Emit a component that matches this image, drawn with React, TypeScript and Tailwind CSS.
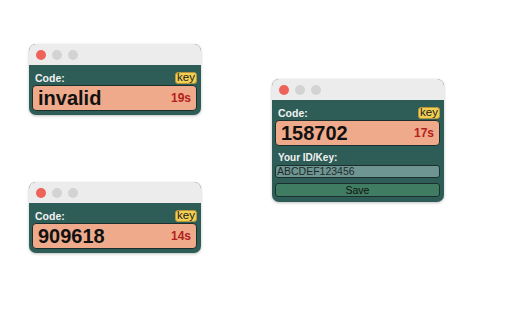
import React from "react";

type WinProps = {
  code: string;
  secs: number;
  withForm?: boolean;
};

function TitleBar() {
  return (
    <div className="h-[21px] bg-[#ececec] flex items-center gap-[6px] pl-[7px]">
      <span className="w-[10px] h-[10px] rounded-full bg-[#ee6259]" />
      <span className="w-[10px] h-[10px] rounded-full bg-[#d3d3d3]" />
      <span className="w-[10px] h-[10px] rounded-full bg-[#d3d3d3]" />
    </div>
  );
}

function CodeWindow({ code, secs, withForm }: WinProps) {
  return (
    <div className="w-[172px] rounded-[7px] overflow-hidden shadow-[0_1px_3px_rgba(0,0,0,0.25)] bg-[#2e5d58]">
      <TitleBar />
      <div className="pt-[7px] pl-[3px] pr-[4px] pb-[4px]">
        <div className="h-[12px] flex items-center justify-between pl-[3px] mb-px">
          <span className="text-[10.5px] font-bold text-[#f2f2f2] leading-none">Code:</span>
          <span className="h-[12px] px-px rounded-[3px] bg-[#f1cf55] border border-[#b8953a] text-[11.5px] leading-none text-[#1c1c1c] flex items-center">
            key
          </span>
        </div>
        <div className="h-[26px] rounded-[4px] bg-[#efaa8b] border border-[#1b2f2d] flex items-center justify-between pl-[5px] pr-[5px]">
          <span className="text-[20px] font-bold text-[#111] leading-none">{code}</span>
          <span className="text-[12px] font-bold text-[#b3201d] leading-none">{secs}s</span>
        </div>
        {withForm && (
          <div className="pb-px">
            <div className="h-[12px] mt-[6px] mb-px flex items-center pl-[3px]">
              <span className="text-[10px] font-bold text-[#f2f2f2] leading-none">Your ID/Key:</span>
            </div>
            <div className="h-[13px] rounded-[3px] bg-[#6e9591] border border-[#1b2f2d] flex items-center pl-px">
              <span className="text-[10.5px] text-[#1d2b2a] leading-none">ABCDEF123456</span>
            </div>
            <div className="h-[14px] mt-[5px] rounded-[3px] bg-[#3f7c62] border border-[#1b2f2d] flex items-center justify-center">
              <span className="text-[10.5px] text-[#111] leading-none">Save</span>
            </div>
          </div>
        )}
      </div>
    </div>
  );
}

export default function App() {
  return (
    <div
      className="relative w-[512px] h-[320px] bg-white overflow-hidden"
      style={{ fontFamily: '"Liberation Sans", Arial, sans-serif' }}
    >
      <div className="absolute left-[29px] top-[44px]">
        <CodeWindow code="invalid" secs={19} />
      </div>
      <div className="absolute left-[29px] top-[182px]">
        <CodeWindow code="909618" secs={14} />
      </div>
      <div className="absolute left-[272px] top-[79px]">
        <CodeWindow code="158702" secs={17} withForm />
      </div>
    </div>
  );
}
